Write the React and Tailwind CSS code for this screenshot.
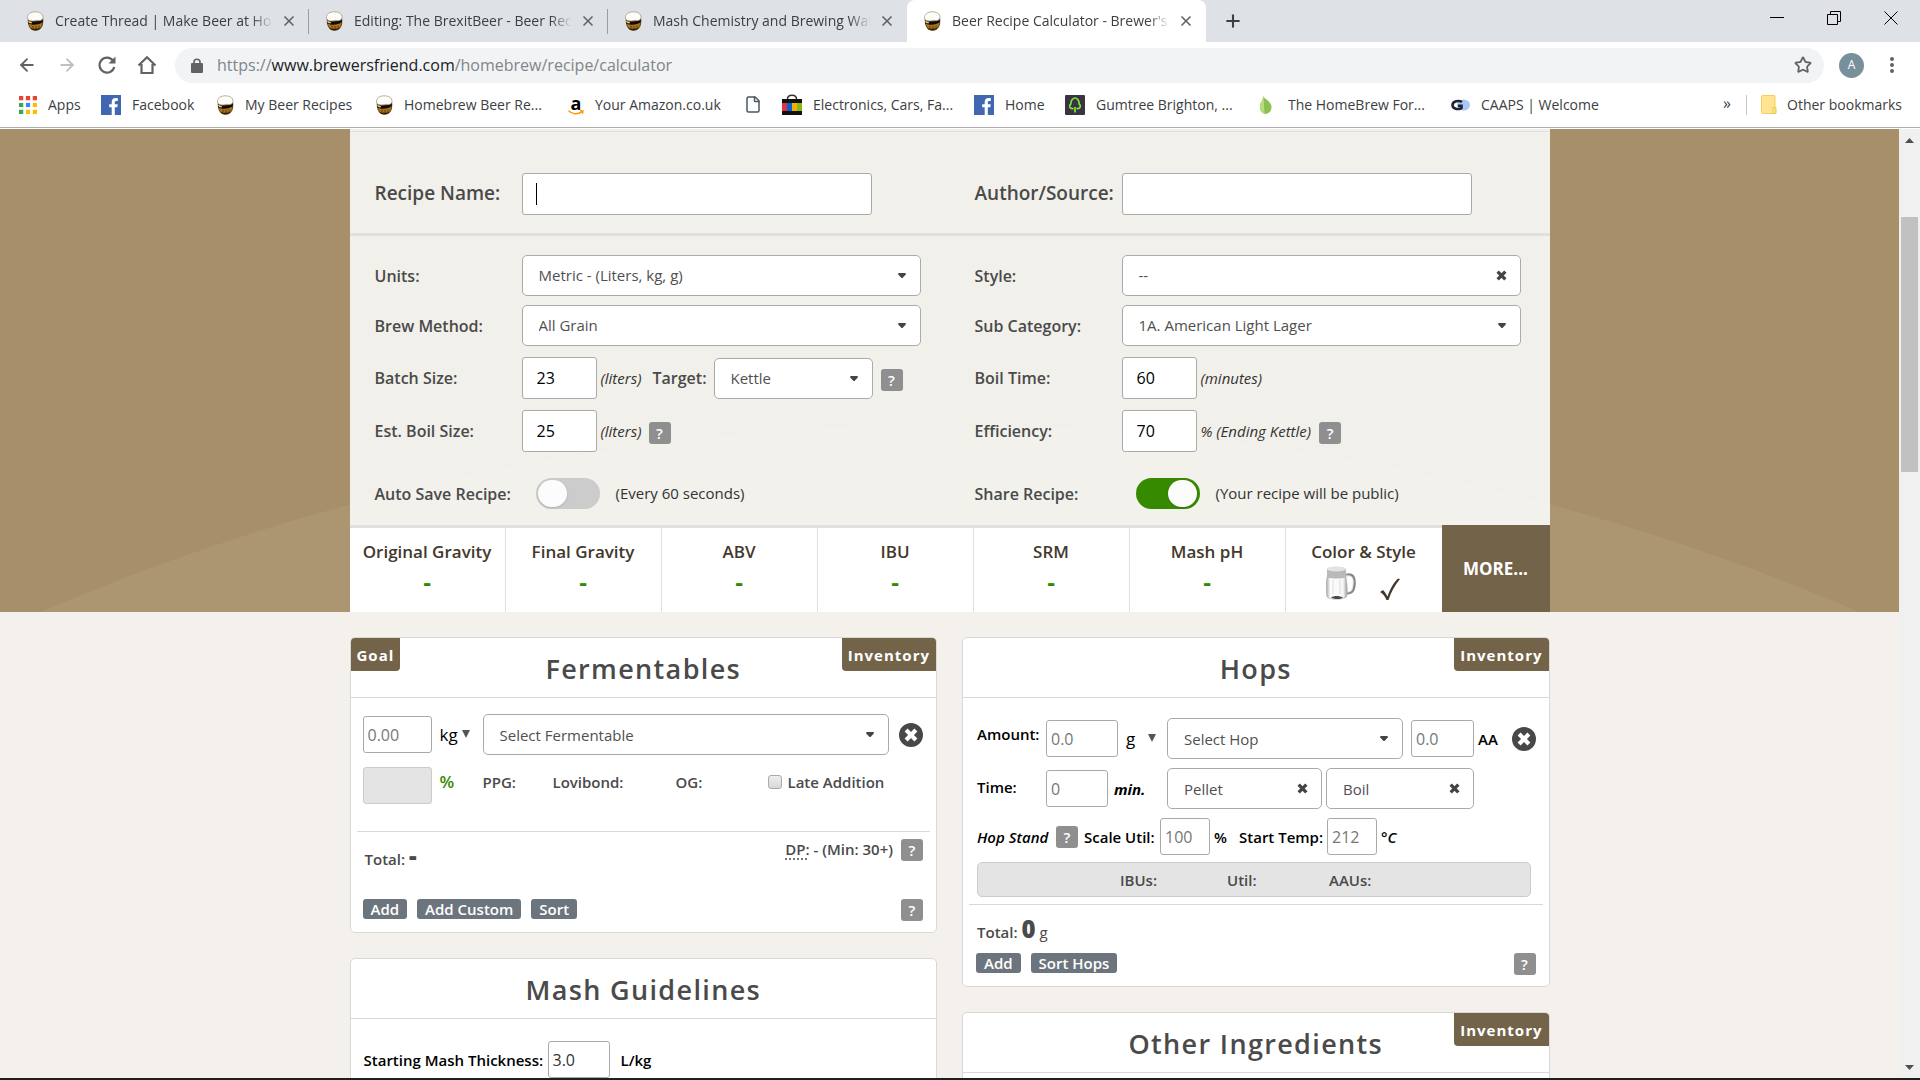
import React from 'react';
import { ArrowLeft, ArrowRight, File, Plus, Star, X } from 'lucide-react';

/* ---------- icons ---------- */

const BeerIcon = () => (
  <svg viewBox="0 0 18 20" className="w-[18px] h-5 shrink-0" aria-hidden="true">
    <path d="M2.500 7 C1.500 13 3.500 19.300 9.500 19.300 C15.500 19.300 17.500 14 16.600 7 Z" fill="#a9741c" stroke="#3a2405" strokeWidth=".8" />
    <path d="M2 8 C4 10.500 13 11.500 16.800 8 L16.800 11 C13 14.500 5 14.500 2 12 Z" fill="#120c04" />
    <path d="M2.500 9.200 C3 10.400 4.500 10.800 6 11 L5.500 12.400 C4 12.200 2.800 11.800 2.200 11 Z" fill="#f0d088" />
    <path d="M4 17 C6 20 13 20 15 16.500 C12 18 7 18 4 17 Z" fill="#2e1b02" />
    <path d="M7 14.800 V17 M10 15 V17.300 M13 14.500 V16.800" stroke="#5c3a08" strokeWidth="1" />
    <path d="M1.500 7 C1 3 5 .8 9.200 .8 C13.500 .8 17.300 2.500 17 6.500 C16.800 9.500 13 10 11 9.300 C7 10.500 2 10.500 1.500 7 Z" fill="#fdfcf7" stroke="#a29c8e" strokeWidth=".8" />
  </svg>
);

const FacebookIcon = () => (
  <svg viewBox="0 0 20 20" className="w-5 h-5 shrink-0" aria-hidden="true">
    <rect width="20" height="20" fill="#4267b2" />
    <path d="M13.800 20 V12.300 H16.300 L16.700 9.300 H13.800 V7.400 C13.800 6.500 14.100 5.900 15.300 5.900 H16.800 V3.200 C16.500 3.200 15.600 3.100 14.600 3.100 C12.300 3.100 10.700 4.500 10.700 7.100 V9.300 H8.200 V12.300 H10.700 V20 Z" fill="#fff" />
  </svg>
);

const AppsIcon = () => (
  <svg viewBox="0 0 17 17" className="w-[18px] h-[18px] shrink-0" aria-hidden="true">
    <path d="M0 0h4v4H0zM6.500 0h4v4h-4zM13 0h4v4h-4z" fill="#ea4335" />
    <path d="M0 6.500h4v4H0zM0 13h4v4H0z" fill="#34a853" />
    <path d="M6.500 6.500h4v4h-4z" fill="#4285f4" />
    <path d="M13 6.500h4v4h-4zM6.500 13h4v4h-4zM13 13h4v4h-4z" fill="#fbbc05" />
  </svg>
);

const AmazonIcon = () => (
  <span className="relative w-4 h-5 shrink-0 text-center" aria-hidden="true">
    <span className="block text-lg leading-4 font-bold text-black">a</span>
    <svg viewBox="0 0 16 5" className="absolute bottom-0 left-0 w-4 h-[5px]">
      <path d="M.5 .8 C4 4.500 10 4.500 14 1.800 M12 .8 L15 .9 L14.500 3.600" fill="none" stroke="#f90" strokeWidth="1.400" />
    </svg>
  </span>
);

const BagIcon = () => (
  <svg viewBox="0 0 20 22" className="w-5 h-[22px] shrink-0" aria-hidden="true">
    <path d="M5.500 7 V5 C5.500 0 14.500 0 14.500 5 V7" fill="none" stroke="#333" strokeWidth="1.500" />
    <rect y="5" width="20" height="16" fill="#111" />
    <path d="M0 9h5v8H0z" fill="#e53238" />
    <path d="M5 9h5v8H5z" fill="#0064d2" />
    <path d="M10 9h5v8h-5z" fill="#f5af02" />
    <path d="M15 9h5v8h-5z" fill="#86b817" />
  </svg>
);

const GumtreeIcon = () => (
  <svg viewBox="0 0 20 20" className="w-5 h-5 shrink-0" aria-hidden="true">
    <rect width="20" height="20" rx="1" fill="#3c3241" />
    <path d="M10 17.500 V12 M8.500 13.500 C4.500 14 3.500 11 5.800 9 C5.500 5 8.500 3 10 3 C11.500 3 14.500 5 14.200 9 C16.500 11 15.500 14 11.500 13.500" fill="none" stroke="#72ef36" strokeWidth="1.700" />
  </svg>
);

const LeafIcon = () => (
  <svg viewBox="0 0 18 20" className="w-[18px] h-5 shrink-0" aria-hidden="true">
    <path d="M4 1 C5 4 13 6 12.500 13 C12 17.500 8 19 6 19 C2 18 .5 14 1 10 C1.500 7 4.500 5 4 1 Z" fill="#8cc152" />
    <path d="M4 1 C6 6 4 12 6 19 C2 18 .5 14 1 10 C1.500 7 4.500 5 4 1 Z" fill="#b6dd7c" />
  </svg>
);

const CaapsIcon = () => (
  <svg viewBox="0 0 20 14" className="w-5 h-3.5 shrink-0" aria-hidden="true">
    <ellipse cx="13.500" cy="7" rx="6.500" ry="5.500" fill="#a9c8f5" />
    <path d="M12 4 C9 2 2.500 3 2.500 7 C2.500 11 8 12 11.500 10 V7.800 H8" fill="none" stroke="#20242e" strokeWidth="2.600" />
  </svg>
);

const FolderIcon = () => (
  <svg viewBox="0 0 16 19" className="w-4 h-[19px] shrink-0" aria-hidden="true">
    <rect x=".5" y=".5" width="13.500" height="18" rx="1" fill="#ffe591" stroke="#f2cf5b" />
    <path d="M12 12.500 h3 v6 h-3 z" fill="#ffe08a" stroke="#efc94c" />
  </svg>
);

const MugIcon = () => (
  <svg viewBox="0 0 30 34" className="w-[30px] h-[34px]" aria-hidden="true">
    <defs>
      <linearGradient id="glass" x1="0" x2="1">
        <stop offset="0" stopColor="#a5a5a5" />
        <stop offset=".2" stopColor="#fdfdfd" />
        <stop offset=".8" stopColor="#f7f7f7" />
        <stop offset="1" stopColor="#9d9d9d" />
      </linearGradient>
    </defs>
    <path d="M20 9 C27 7.500 29 11 28.500 18 C28 25 26 28 20 27" fill="none" stroke="#8a8a8a" strokeWidth="2.600" />
    <path d="M20 10 C26 9 27.500 12 27 18 C26.500 24 25 26.500 20 26" fill="none" stroke="#e8e8e8" strokeWidth="1" />
    <path d="M1 11 H20 C21 18 22 26 20.500 31 C17 34 4 34 1 31 C-.2 25 0 18 1 11 Z" fill="url(#glass)" stroke="#aaa" strokeWidth=".6" />
    <path d="M1 3 C4 0 17 0 20 3 V11 C15 13 5 13 1 11 Z" fill="#b9b9b9" />
    <ellipse cx="10.500" cy="3" rx="9.500" ry="2.400" fill="#e3e3e3" />
    <path d="M5 31.500 C8 29.500 13 29.500 17 31.500 C14 33.500 9 33.500 5 31.500 Z" fill="#4a4a4a" />
    <path d="M7 14 V28 M14 14 V28" stroke="#ddd" strokeWidth="1" />
  </svg>
);

const Caret = ({ className = '' }) => (
  <svg viewBox="0 0 8 5" className={`w-2 h-[5px] pointer-events-none ${className}`} aria-hidden="true">
    <path d="M.5 0 H7.500 L8 1.200 L4.500 5 H3.500 L0 1.200 Z" fill="#444" />
  </svg>
);

const Cross = ({ className = '', color = '#444' }) => (
  <svg viewBox="0 0 10 10" className={className} aria-hidden="true">
    <path d="M1.500 1.500 L8.500 8.500 M8.500 1.500 L1.500 8.500" stroke={color} strokeWidth="3" />
  </svg>
);

/* ---------- browser chrome ---------- */

const tabs = [
  { title: 'Create Thread | Make Beer at Home', active: false },
  { title: 'Editing: The BrexitBeer - Beer Recipe', active: false },
  { title: 'Mash Chemistry and Brewing Water', active: false },
  { title: "Beer Recipe Calculator - Brewer's Friend", active: true },
];

const bookmarks = [
  { label: 'Apps', icon: <AppsIcon />, width: 'w-[82px]' },
  { label: 'Facebook', icon: <FacebookIcon />, width: 'w-[115px]' },
  { label: 'My Beer Recipes', icon: <BeerIcon />, width: 'w-[159px]' },
  { label: 'Homebrew Beer Re...', icon: <BeerIcon />, width: 'w-[193px]' },
  { label: 'Your Amazon.co.uk', icon: <AmazonIcon />, width: 'w-[176px]' },
  { label: '', icon: <File className="w-[18px] h-[19px] text-gray-600" strokeWidth={2} />, width: 'w-[38px]' },
  { label: 'Electronics, Cars, Fa...', icon: <BagIcon />, width: 'w-[192px]' },
  { label: 'Home', icon: <FacebookIcon />, width: 'w-[91px]' },
  { label: 'Gumtree Brighton, ...', icon: <GumtreeIcon />, width: 'w-[194px]' },
  { label: 'The HomeBrew For...', icon: <LeafIcon />, width: 'w-[191px]' },
  { label: 'CAAPS | Welcome', icon: <CaapsIcon />, width: 'w-[170px]' },
];

const TabStrip = () => (
  <div className="flex h-[42px] bg-[#dee1e6] pl-2.5">
    {tabs.map((tab, i) => (
      <div
        key={tab.title}
        className={`relative flex items-center w-[299px] pl-4 pr-3 ${tab.active ? 'bg-white rounded-t-lg' : ''}`}
      >
        <BeerIcon />
        <span
          className="ml-[11px] w-[222px] overflow-hidden whitespace-nowrap text-sm text-[#3c4043] [mask-image:linear-gradient(to_right,black_90%,transparent)]"
        >
          {tab.title}
        </span>
        <button type="button" aria-label="Close tab" className="ml-2 text-[#5f6368]">
          <X className="w-4 h-4" strokeWidth={2.5} />
        </button>
        {i < 2 && <span className="absolute right-0 top-[9px] h-[25px] w-px bg-[#9a9da1]" />}
      </div>
    ))}
    <button type="button" aria-label="New tab" className="ml-[17px] text-[#3c4043]">
      <Plus className="w-5 h-5" strokeWidth={2.5} />
    </button>
    <div className="ml-auto flex items-center gap-[43px] pr-[22px] pb-1.5">
      <button type="button" aria-label="Minimize">
        <svg viewBox="0 0 14 14" className="w-3.5 h-3.5"><path d="M0 6.500 H14" stroke="#000" /></svg>
      </button>
      <button type="button" aria-label="Restore">
        <svg viewBox="0 0 14 14" className="w-3.5 h-3.5">
          <path d="M.5 3.500 H10.500 V13.500 H.5 Z M3.500 3.500 V.5 H13.500 V10.500 H10.500" fill="none" stroke="#000" />
        </svg>
      </button>
      <button type="button" aria-label="Close">
        <svg viewBox="0 0 14 14" className="w-3.5 h-3.5"><path d="M.5 .5 L13.500 13.500 M13.500 .5 L.5 13.500" stroke="#000" /></svg>
      </button>
    </div>
  </div>
);

const Toolbar = () => (
  <div className="flex items-center h-[46px] pl-[17px] pr-6 text-[#5f6368]">
    <button type="button" aria-label="Back" className="w-10"><ArrowLeft className="w-5 h-5" strokeWidth={2.2} /></button>
    <button type="button" aria-label="Forward" className="w-10 text-[#bdc1c6]"><ArrowRight className="w-5 h-5" strokeWidth={2.2} /></button>
    <button type="button" aria-label="Reload" className="w-10">
      <svg viewBox="0 0 20 20" className="w-5 h-5">
        <path d="M16 5.500 A7.500 7.500 0 1 0 17.300 12" fill="none" stroke="currentColor" strokeWidth="2.200" />
        <path d="M18.500 1.500 V8.500 H11.500 Z" fill="currentColor" />
      </svg>
    </button>
    <button type="button" aria-label="Home" className="w-[38px]">
      <svg viewBox="0 0 20 20" className="w-5 h-5">
        <path d="M1.500 10.500 L10 2.200 L18.500 10.500 M4.500 9 V18 H15.500 V9" fill="none" stroke="currentColor" strokeWidth="2.200" />
      </svg>
    </button>
    <div className="flex items-center flex-1 h-[35px] rounded-full bg-[#f1f3f4] pl-4 pr-3">
      <svg viewBox="0 0 12 15" className="w-3 h-[15px] shrink-0">
        <rect y="5" width="12" height="10" rx="1" fill="#5f6368" />
        <path d="M3 6 V4 C3 .3 9 .3 9 4 V6" fill="none" stroke="#5f6368" strokeWidth="1.600" />
      </svg>
      <span className="ml-3.5 flex-1 text-base text-[#80868b]">
        https://<span className="text-[#202124]">www.brewersfriend.com</span>/homebrew/recipe/calculator
      </span>
      <button type="button" aria-label="Bookmark this page"><Star className="w-[18px] h-[18px]" strokeWidth={2.4} /></button>
    </div>
    <span className="ml-[15px] flex items-center justify-center w-[25px] h-[25px] rounded-full bg-[#78909c] text-xs text-white">A</span>
    <button type="button" aria-label="Menu" className="ml-6">
      <svg viewBox="0 0 8 18" className="w-2 h-[18px]">
        <circle cx="4" cy="3" r="2" fill="#5f6368" />
        <circle cx="4" cy="9" r="2" fill="#5f6368" />
        <circle cx="4" cy="15" r="2" fill="#5f6368" />
      </svg>
    </button>
  </div>
);

const BookmarksBar = () => (
  <div className="flex items-center h-[39px] pb-1.5 pl-[19px] pr-[18px] text-sm text-[#3c4043] whitespace-nowrap">
    {bookmarks.map((b, i) => (
      <a key={i} href="#" aria-label={b.label || 'Page'} className={`flex items-center gap-[11px] ${b.width}`}>
        {b.icon}
        {b.label && <span>{b.label}</span>}
      </a>
    ))}
    <button type="button" className="ml-auto text-base leading-none pb-1" aria-label="More bookmarks">»</button>
    <a href="#" className="ml-[15px] flex items-center gap-2.5 border-l border-[#c4c7cb] pl-3.5">
      <FolderIcon />
      Other bookmarks
    </a>
  </div>
);

const Scrollbar = () => (
  <div className="flex flex-col items-center w-[21px] shrink-0 bg-[#f0f0f0]" aria-hidden="true">
    <svg viewBox="0 0 9 5" className="mt-[9px] w-[9px] h-[5px]"><path d="M0 5 L4.500 0 L9 5 Z" fill="#505050" /></svg>
    <div className="mt-[74px] h-[255px] w-[17px] bg-[#c1c1c1]" />
    <svg viewBox="0 0 9 5" className="mt-auto mb-2 w-[9px] h-[5px]"><path d="M0 0 L4.500 5 L9 0 Z" fill="#505050" /></svg>
  </div>
);

/* ---------- form parts ---------- */

const Help = ({ className = '' }) => (
  <button
    type="button"
    aria-label="Help"
    className={`w-[22px] h-[22px] shrink-0 rounded-[3px] bg-[#8f8f8f] text-[15px] leading-[22px] font-semibold text-white ${className}`}
  >
    ?
  </button>
);

const Dropdown = ({ id, label, value, clearable = false, className = '' }) => (
  <div className={`relative h-[41px] shrink-0 ${className}`}>
    <select
      id={id}
      aria-label={label}
      className="w-full h-full appearance-none rounded-[5px] border border-[#aaa] bg-white pl-4 pr-8 text-[15px] font-normal text-[#505050]"
    >
      <option>{value}</option>
    </select>
    {clearable ? (
      <Cross className="absolute right-[14px] top-[15px] w-[11px] h-[11px] pointer-events-none" />
    ) : (
      <Caret className="absolute right-[15px] top-[18px]" />
    )}
  </div>
);

const UnitSelect = ({ label, value, className = '', caret = '' }) => (
  <div className={`relative shrink-0 ${className}`}>
    <select aria-label={label} className="w-full appearance-none bg-transparent text-[17px] leading-6 font-normal text-black">
      <option>{value}</option>
    </select>
    <svg viewBox="0 0 8 8" className={`absolute top-[7px] w-2 h-2 pointer-events-none ${caret}`} aria-hidden="true">
      <path d="M0 0 H8 L4 8 Z" fill="#555" />
    </svg>
  </div>
);

const TextBox = ({ className = '', ...props }) => (
  <input type="text" className={`shrink-0 rounded-[3px] border border-[#aaa] bg-white ${className}`} {...props} />
);

const Row = ({ id, label, children, className = 'mt-[11px] h-[42px]' }) => (
  <div className={`flex items-center ${className}`}>
    <label htmlFor={id} className="w-[147px] shrink-0 text-base font-semibold text-[#4a4a4a]">{label}</label>
    {children}
  </div>
);

const Toggle = ({ id, on = false }) => (
  <span className="relative ml-3.5 w-16 h-[31px] shrink-0">
    <input
      id={id}
      type="checkbox"
      role="switch"
      defaultChecked={on}
      className="peer block w-full h-full appearance-none rounded-full bg-[#ccc] checked:bg-[#368a00]"
    />
    <span className="absolute top-0.5 left-0.5 w-[29px] h-[27px] rounded-full bg-[#fcfcfc] shadow pointer-events-none peer-checked:left-8" />
  </span>
);

const SmallButton = ({ children }) => (
  <button type="button" className="h-5 rounded-[3px] bg-[#6c757d] px-2 text-[15px] leading-5 font-semibold text-white">
    {children}
  </button>
);

const RemoveButton = ({ label }) => (
  <button
    type="button"
    aria-label={label}
    className="ml-auto flex items-center justify-center w-6 h-6 shrink-0 rounded-full bg-[#484848]"
  >
    <Cross className="w-3.5 h-3.5" color="#fff" />
  </button>
);

const Card = ({ title, goal = false, inventory = false, children }) => (
  <section className="relative rounded-[5px] border border-[#d8d8d8] bg-white text-[15px] leading-5 font-semibold text-[#4a4a4a]">
    {goal && (
      <button type="button" className="absolute left-0 top-0 h-[33px] rounded-tl rounded-br bg-[#736349] px-1.5 font-bold tracking-[1px] text-white">
        Goal
      </button>
    )}
    {inventory && (
      <button type="button" className="absolute right-0 top-0 h-[33px] rounded-tr rounded-bl bg-[#736349] px-1.5 font-bold tracking-[1px] text-white">
        Inventory
      </button>
    )}
    <h2 className="h-[60px] border-b border-[#d8d8d8] pt-[3px] text-center text-[27px] leading-[56px] font-semibold tracking-wider">{title}</h2>
    {children}
  </section>
);

/* ---------- page sections ---------- */

const RecipeHeader = () => (
  <div className="pt-0.5">
    <div className="grid grid-cols-2 border-t border-b-[3px] border-t-[#e0e0e0] border-b-[#e0e0e0] pt-[41px] pb-[18px]">
      <div className="flex items-center pl-[25px]">
        <label htmlFor="name" className="w-[147px] shrink-0 pb-0.5 text-[19px] font-semibold text-[#4a4a4a]">Recipe Name:</label>
        <div className="relative">
          <TextBox id="name" className="w-[350px] h-[42px] px-3.5" />
          <span className="absolute left-3.5 top-2.5 h-[22px] w-px bg-black" />
        </div>
      </div>
      <div className="flex items-center pl-[25px]">
        <label htmlFor="author" className="w-[147px] shrink-0 pb-0.5 text-[19px] font-semibold text-[#4a4a4a]">Author/Source:</label>
        <TextBox id="author" className="w-[350px] h-[42px] px-3.5" />
      </div>
    </div>
  </div>
);

const RecipeSettings = () => (
  <div className="grid grid-cols-2 pt-[19px] pb-4 text-[15px] text-[#333]">
    <div className="flex flex-col pl-[25px]">
      <Row id="units" label="Units:" className="h-[41px]">
        <Dropdown id="units" value="Metric - (Liters, kg, g)" className="w-[399px]" />
      </Row>
      <Row id="method" label="Brew Method:" className="mt-[9px] h-[41px]">
        <Dropdown id="method" value="All Grain" className="w-[399px]" />
      </Row>
      <Row id="batch" label="Batch Size:">
        <TextBox id="batch" defaultValue="23" className="w-[75px] h-[42px] px-3.5 text-base text-black" />
        <em className="ml-1 w-[52px]">(liters)</em>
        <label htmlFor="target" className="w-[61px] text-base font-semibold text-[#4a4a4a]">Target:</label>
        <Dropdown id="target" value="Kettle" className="w-[159px]" />
        <Help className="ml-2 mt-1" />
      </Row>
      <Row id="boil" label="Est. Boil Size:">
        <TextBox id="boil" defaultValue="25" className="w-[75px] h-[42px] px-3.5 text-base text-black" />
        <em className="ml-1 w-[48px]">(liters)</em>
        <Help className="mt-1" />
      </Row>
      <Row id="autosave" label="Auto Save Recipe:" className="mt-[26px] h-[31px]">
        <Toggle id="autosave" />
        <span className="ml-4">(Every 60 seconds)</span>
      </Row>
    </div>
    <div className="flex flex-col pl-[25px]">
      <Row id="style" label="Style:" className="h-[41px]">
        <Dropdown id="style" value="--" clearable className="w-[399px]" />
      </Row>
      <Row id="subcat" label="Sub Category:" className="mt-[9px] h-[41px]">
        <Dropdown id="subcat" value="1A. American Light Lager" className="w-[399px]" />
      </Row>
      <Row id="boiltime" label="Boil Time:">
        <TextBox id="boiltime" defaultValue="60" className="w-[75px] h-[42px] px-3.5 text-base text-black" />
        <em className="ml-1">(minutes)</em>
      </Row>
      <Row id="efficiency" label="Efficiency:">
        <TextBox id="efficiency" defaultValue="70" className="w-[75px] h-[42px] px-3.5 text-base text-black" />
        <em className="ml-1">% (Ending Kettle)</em>
        <Help className="ml-2 mt-1" />
      </Row>
      <Row id="share" label="Share Recipe:" className="mt-[26px] h-[31px]">
        <Toggle id="share" on />
        <span className="ml-4">(Your recipe will be public)</span>
      </Row>
    </div>
  </div>
);

const stats = ['Original Gravity', 'Final Gravity', 'ABV', 'IBU', 'SRM', 'Mash pH'];

const StatsBar = () => (
  <div className="flex h-[87px] text-center text-[17px] leading-6 font-semibold text-[#43382c]">
    <div className="grid flex-1 grid-cols-7 border-t-[3px] border-[#e0e0e0] bg-white">
      {stats.map((name) => (
        <div key={name} className="border-r border-[#e0e0e0] pt-3">
          <div className="whitespace-nowrap">{name}</div>
          <div className="mt-0.5 text-2xl font-bold text-[#368a00]">-</div>
        </div>
      ))}
      <div className="pt-3">
        <div className="whitespace-nowrap">Color &amp; Style</div>
        <div className="flex justify-center gap-6 pt-0.5 pr-0.5">
          <MugIcon />
          <svg viewBox="0 0 20 22" className="mt-3 w-5 h-[22px]" aria-hidden="true">
            <path d="M0 14 L3 12 C5 14 6 16 7.500 18.500 C10 11 14 4 18 .5 L20 1 C15 7 11 14 8.500 22 L6.500 22 C5 18.500 3 15.500 0 14 Z" fill="#43382c" />
          </svg>
        </div>
      </div>
    </div>
    <button type="button" className="w-[108px] bg-[#736349] text-[17px] font-bold text-white">MORE...</button>
  </div>
);

const Fermentables = () => (
  <Card title="Fermentables" goal inventory>
    <div className="flex items-center pt-4 pl-3 pr-[13px]">
      <TextBox aria-label="Amount" placeholder="0.00" className="w-[69px] h-[37px] px-1 text-base font-normal placeholder:text-[#777]" />
      <UnitSelect label="Unit" value="kg" className="ml-2 w-[43px]" caret="left-[22px]" />
      <Dropdown label="Fermentable" value="Select Fermentable" className="w-[406px]" />
      <RemoveButton label="Remove fermentable" />
    </div>
    <div className="flex items-start pt-3 pl-3 leading-[30px]">
      <TextBox aria-label="Percent" disabled className="w-[69px] h-[37px] border-[#ccc] !bg-[#e4e4e4]" />
      <span className="ml-2 w-[43px] text-[17px] leading-[30px] text-[#368a00]">%</span>
      <span className="w-[70px]">PPG:</span>
      <span className="w-[123px]">Lovibond:</span>
      <span className="w-[92px]">OG:</span>
      <label className="flex items-center gap-1.5">
        <input type="checkbox" className="w-3.5 h-3.5 appearance-none rounded-[3px] border border-[#aaa] bg-gradient-to-b from-[#eee] to-[#d8d8d8]" />
        Late Addition
      </label>
    </div>
    <div className="mx-1.5 mt-[27px] flex items-start border-t border-[#d8d8d8] pl-2 pr-[7px] pt-[7px]">
      <span className="pt-[7px]">Total: <b className="text-2xl leading-5">-</b></span>
      <span className="ml-auto mr-2">
        <abbr title="Diastatic Power" className="underline decoration-dotted underline-offset-4">DP:</abbr> - (Min: 30+)
      </span>
      <Help />
    </div>
    <div className="mt-[30px] flex gap-2.5 pb-[11px] pl-3 pr-[13px]">
      <SmallButton>Add</SmallButton>
      <SmallButton>Add Custom</SmallButton>
      <SmallButton>Sort</SmallButton>
      <Help className="ml-auto" />
    </div>
  </Card>
);

const MashGuidelines = () => (
  <Card title="Mash Guidelines">
    <div className="flex items-center pt-[22px] pb-4 pl-[13px] text-black">
      <label htmlFor="thickness" className="w-[184px] whitespace-nowrap">Starting Mash Thickness:</label>
      <TextBox id="thickness" defaultValue="3.0" className="w-[62px] h-[37px] px-1 text-base font-normal text-[#333]" />
      <span className="ml-[11px]">L/kg</span>
    </div>
  </Card>
);

const Hops = () => (
  <Card title="Hops" inventory>
    <div className="flex items-center pt-5 pl-3.5 pr-[13px] text-black">
      <label htmlFor="hop-amount" className="w-[69px] self-start leading-8">Amount:</label>
      <TextBox id="hop-amount" placeholder="0.0" className="w-[72px] h-[37px] px-1 text-base font-normal placeholder:text-[#777]" />
      <UnitSelect label="Hop unit" value="g" className="ml-2 w-[41px]" caret="left-[22px]" />
      <Dropdown label="Hop" value="Select Hop" className="w-[236px]" />
      <TextBox aria-label="Alpha acid" placeholder="0.0" className="ml-2 w-[63px] h-[37px] px-1 text-base font-normal placeholder:text-[#777]" />
      <span className="ml-1">AA</span>
      <RemoveButton label="Remove hop" />
    </div>
    <div className="flex items-center pt-[9px] pl-3.5 text-black">
      <label htmlFor="hop-time" className="w-[69px] self-center pb-1">Time:</label>
      <TextBox id="hop-time" placeholder="0" className="w-[62px] h-[37px] px-1 text-base font-normal placeholder:text-[#777]" />
      <em className="ml-1.5 w-[53px] font-bold">min.</em>
      <Dropdown label="Hop type" value="Pellet" clearable className="w-[155px]" />
      <Dropdown label="Use" value="Boil" clearable className="ml-1 w-[148px]" />
    </div>
    <div className="flex items-center pt-[9px] pl-3.5 text-black">
      <em className="w-[79px]">Hop Stand</em>
      <Help />
      <label htmlFor="scale-util" className="ml-1.5 w-[76px]">Scale Util:</label>
      <TextBox id="scale-util" placeholder="100" className="w-[50px] h-[37px] px-1 text-base font-normal placeholder:text-[#777]" />
      <span className="ml-1 w-[25px]">%</span>
      <label htmlFor="start-temp" className="w-[88px]">Start Temp:</label>
      <TextBox id="start-temp" placeholder="212" className="w-[50px] h-[37px] px-1 text-base font-normal placeholder:text-[#777]" />
      <em className="ml-1">°C</em>
    </div>
    <div className="mt-[7px] ml-3.5 mr-[18px] flex items-center h-[35px] rounded-[5px] border border-[#ccc] bg-[#e4e4e4] pl-[142px]">
      <span className="w-[107px]">IBUs:</span>
      <span className="w-[102px]">Util:</span>
      <span>AAUs:</span>
    </div>
    <div className="mx-1.5 mt-[7px] border-t border-[#d8d8d8] pt-2 pl-2">
      Total: <b className="text-2xl">0</b> <span className="font-normal">g</span>
    </div>
    <div className="mt-2 flex gap-2.5 pb-[11px] pl-[13px] pr-[13px]">
      <SmallButton>Add</SmallButton>
      <SmallButton>Sort Hops</SmallButton>
      <Help className="ml-auto" />
    </div>
  </Card>
);

const OtherIngredients = () => (
  <Card title="Other Ingredients" inventory>
    <div className="h-40" />
  </Card>
);

export default function App() {
  return (
    <div className="flex h-screen flex-col overflow-hidden bg-white font-['Open_Sans',sans-serif]">
      <header className="shrink-0 border-b border-[#b0b0b0]">
        <TabStrip />
        <Toolbar />
        <BookmarksBar />
      </header>
      <div className="mt-px flex min-h-0 flex-1">
        <main className="flex-1 overflow-hidden bg-[#f4f0eb]">
          <div className="relative overflow-hidden bg-[#a78f69]">
            <svg viewBox="0 0 1899 483" preserveAspectRatio="xMidYMax slice" className="absolute inset-0 w-full h-full" aria-hidden="true">
              <circle cx="950" cy="2602" r="2306" fill="#ac9571" />
            </svg>
            <div className="relative mx-auto w-[1200px] bg-[#f6f5f1]/95">
              <RecipeHeader />
              <RecipeSettings />
              <StatsBar />
            </div>
          </div>
          <div className="mx-auto mt-[25px] grid w-[1200px] grid-cols-2 items-start gap-[25px]">
            <div className="flex flex-col gap-[25px]">
              <Fermentables />
              <MashGuidelines />
            </div>
            <div className="flex flex-col gap-[25px]">
              <Hops />
              <OtherIngredients />
            </div>
          </div>
        </main>
        <Scrollbar />
      </div>
      <div className="h-0.5 shrink-0 bg-[#1f1f1f]" />
    </div>
  );
}
